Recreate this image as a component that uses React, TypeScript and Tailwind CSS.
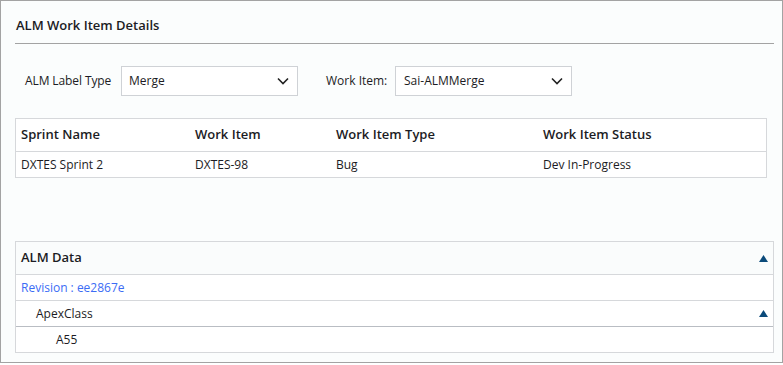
import React from "react";

const Chevron = () => (
  <svg width="12" height="8" viewBox="0 0 12 8" className="shrink-0">
    <polyline points="1,1.5 6,6.5 11,1.5" fill="none" stroke="#222" strokeWidth="1.6" />
  </svg>
);

const Caret = () => (
  <svg width="9" height="7" viewBox="0 0 9 7" className="shrink-0">
    <polygon points="4.5,0 9,7 0,7" fill="#0b4a7a" />
  </svg>
);

export default function App() {
  return (
    <div
      className="w-[783px] h-[363px] border border-[#a3a3a3] bg-[#fbfdfd] text-[#1c1c24] box-border"
      style={{ fontFamily: '"Open Sans", "Noto Sans", sans-serif' }}
    >
      <div className="pl-[14px] pr-[8px]">
        <div className="h-[43px] flex items-center pl-[1px] border-b border-[#a3a3a3]">
          <span className="text-[13px] font-semibold pt-[8px]">ALM Work Item Details</span>
        </div>
        <div className="flex items-center h-[30px] mt-[22px] text-[12px]">
          <span className="pl-[10px] w-[106px] tracking-[-0.1px]">ALM Label Type</span>
          <div className="w-[177px] h-[30px] border border-[#cfd2d6] bg-white flex items-center justify-between pl-[7px] pr-[8px]">
            <span className="font-medium">Merge</span>
            <Chevron />
          </div>
          <span className="ml-[28px] w-[69px]">Work Item:</span>
          <div className="w-[177px] h-[30px] border border-[#cfd2d6] bg-white flex items-center justify-between pl-[8px] pr-[8px]">
            <span className="font-medium">Sai-ALMMerge</span>
            <Chevron />
          </div>
        </div>
        <div className="mt-[22px] w-[752px] border border-[#d6d8db] bg-white">
          <div className="grid grid-cols-[174px_141px_207px_1fr] h-[33px] items-center border-b border-[#d6d8db] text-[13px] font-semibold pl-[5px]">
            <span>Sprint Name</span>
            <span>Work Item</span>
            <span>Work Item Type</span>
            <span>Work Item Status</span>
          </div>
          <div className="grid grid-cols-[174px_141px_207px_1fr] h-[25px] items-center text-[12px] pl-[5px]">
            <span>DXTES Sprint 2</span>
            <span>DXTES-98</span>
            <span>Bug</span>
            <span>Dev In-Progress</span>
          </div>
        </div>
        <div className="mt-[63px] w-[759px] border border-[#d6d8db] bg-white">
          <div className="h-[33px] flex items-center justify-between pl-[5px] pr-[5px] bg-[#fafcfc] border-b border-[#d6d8db]">
            <span className="text-[13px] font-semibold">ALM Data</span>
            <Caret />
          </div>
          <div className="h-[26px] flex items-center pl-[5px] border-b border-[#d6d8db] text-[12px] text-[#3b6cf5]">
            Revision : ee2867e
          </div>
          <div className="h-[26px] flex items-center justify-between pl-[20px] pr-[5px] border-b border-[#b9bdc3] text-[12px]">
            <span>ApexClass</span>
            <Caret />
          </div>
          <div className="h-[25px] flex items-center pl-[40px] text-[12px]">A55</div>
        </div>
      </div>
    </div>
  );
}
